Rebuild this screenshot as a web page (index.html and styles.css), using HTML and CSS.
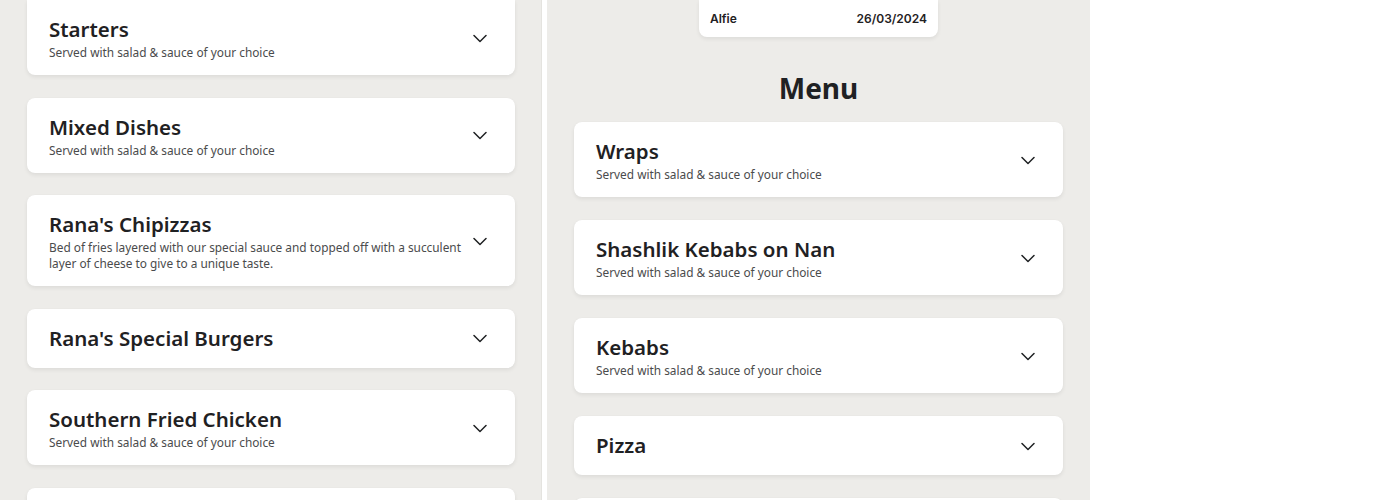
FILE: index.html
```html
<!DOCTYPE html>
<html lang="en">
<head>
<meta charset="utf-8">
<title>Menu</title>
<link rel="stylesheet" href="styles.css">
</head>
<body>
<div class="screens">
  <section class="screen screen--first">
    <div class="list">
      <div class="card card--clipped">
        <div class="card-text">
          <h2 class="card-title">Starters</h2>
          <p class="card-sub">Served with salad &amp; sauce of your choice</p>
        </div>
        <svg class="chev" viewBox="0 0 14 14" width="14" height="14"><path d="M1 4.5 L7 10.5 L13 4.5"/></svg>
      </div>
      <div class="card">
        <div class="card-text">
          <h2 class="card-title">Mixed Dishes</h2>
          <p class="card-sub">Served with salad &amp; sauce of your choice</p>
        </div>
        <svg class="chev" viewBox="0 0 14 14" width="14" height="14"><path d="M1 4.5 L7 10.5 L13 4.5"/></svg>
      </div>
      <div class="card">
        <div class="card-text">
          <h2 class="card-title">Rana's Chipizzas</h2>
          <p class="card-sub">Bed of fries layered with our special sauce and topped off with a succulent layer of cheese to give to a unique taste.</p>
        </div>
        <svg class="chev" viewBox="0 0 14 14" width="14" height="14"><path d="M1 4.5 L7 10.5 L13 4.5"/></svg>
      </div>
      <div class="card">
        <div class="card-text">
          <h2 class="card-title">Rana's Special Burgers</h2>
        </div>
        <svg class="chev" viewBox="0 0 14 14" width="14" height="14"><path d="M1 4.5 L7 10.5 L13 4.5"/></svg>
      </div>
      <div class="card">
        <div class="card-text">
          <h2 class="card-title">Southern Fried Chicken</h2>
          <p class="card-sub">Served with salad &amp; sauce of your choice</p>
        </div>
        <svg class="chev" viewBox="0 0 14 14" width="14" height="14"><path d="M1 4.5 L7 10.5 L13 4.5"/></svg>
      </div>
      <div class="card card--peek"></div>
    </div>
  </section>

  <section class="screen">
    <div class="info-card">
      <span class="info-name">Alfie</span>
      <span class="info-date">26/03/2024</span>
    </div>
    <h1 class="menu-title">Menu</h1>
    <div class="list list--menu">
      <div class="card">
        <div class="card-text">
          <h2 class="card-title">Wraps</h2>
          <p class="card-sub">Served with salad &amp; sauce of your choice</p>
        </div>
        <svg class="chev" viewBox="0 0 14 14" width="14" height="14"><path d="M1 4.5 L7 10.5 L13 4.5"/></svg>
      </div>
      <div class="card">
        <div class="card-text">
          <h2 class="card-title">Shashlik Kebabs on Nan</h2>
          <p class="card-sub">Served with salad &amp; sauce of your choice</p>
        </div>
        <svg class="chev" viewBox="0 0 14 14" width="14" height="14"><path d="M1 4.5 L7 10.5 L13 4.5"/></svg>
      </div>
      <div class="card">
        <div class="card-text">
          <h2 class="card-title">Kebabs</h2>
          <p class="card-sub">Served with salad &amp; sauce of your choice</p>
        </div>
        <svg class="chev" viewBox="0 0 14 14" width="14" height="14"><path d="M1 4.5 L7 10.5 L13 4.5"/></svg>
      </div>
      <div class="card">
        <div class="card-text">
          <h2 class="card-title">Pizza</h2>
        </div>
        <svg class="chev" viewBox="0 0 14 14" width="14" height="14"><path d="M1 4.5 L7 10.5 L13 4.5"/></svg>
      </div>
      <div class="card card--peek"></div>
    </div>
  </section>
</div>
</body>
</html>
```

FILE: styles.css
```css
* { box-sizing: border-box; }

html, body {
  margin: 0;
  padding: 0;
  height: 100%;
  background: #ffffff;
  overflow: hidden;
}

body {
  font-family: "Noto Sans", "Open Sans", sans-serif;
  color: #1f2123;
}

.screens {
  display: flex;
  gap: 5px;
  height: 500px;
}

.screen {
  width: 543px;
  height: 500px;
  background: #edece9;
  padding: 0 27px;
  overflow: hidden;
  display: flex;
  flex-direction: column;
}

.screen--first {
  width: 542px;
  padding-right: 26px;
  border-right: 1px solid #e4e3df;
}

.list {
  display: flex;
  flex-direction: column;
  gap: 22.6px;
}

.list--menu {
  gap: 23px;
}

.card {
  flex-shrink: 0;
  background: #ffffff;
  border-radius: 8px;
  box-shadow: 0 2px 4px rgba(0, 0, 0, 0.07), 0 0 1px rgba(0, 0, 0, 0.04);
  padding: 15px 28px 15px 22px;
  display: flex;
  align-items: center;
  gap: 6px;
}

.card--clipped {
  padding-top: 15px;
  border-top-left-radius: 0;
  border-top-right-radius: 0;
}

.card--peek {
  height: 59px;
}

.card-text {
  flex: 1;
  min-width: 0;
}

.card-title {
  margin: 0;
  font-size: 20.5px;
  line-height: 29px;
  font-weight: 600;
  color: #1f2123;
}

.card-sub {
  margin: 0;
  font-size: 11.85px;
  line-height: 16px;
  color: #4a4b4c;
}

.chev {
  flex-shrink: 0;
  fill: none;
  stroke: #1f2123;
  stroke-width: 1.5;
  stroke-linecap: round;
  stroke-linejoin: round;
}

.info-card {
  align-self: center;
  width: 239px;
  flex-shrink: 0;
  background: #ffffff;
  border-radius: 0 0 8px 8px;
  box-shadow: 0 2px 4px rgba(0, 0, 0, 0.07);
  padding: 11px 11px;
  display: flex;
  justify-content: space-between;
  font-family: "Inter", "Lato", sans-serif;
  font-weight: 600;
  font-size: 12px;
  line-height: 15px;
  color: #1f2123;
}

.menu-title {
  margin: 31px 0 14px;
  text-align: center;
  font-size: 28px;
  line-height: 40px;
  font-weight: 700;
  color: #1f2123;
}
```
